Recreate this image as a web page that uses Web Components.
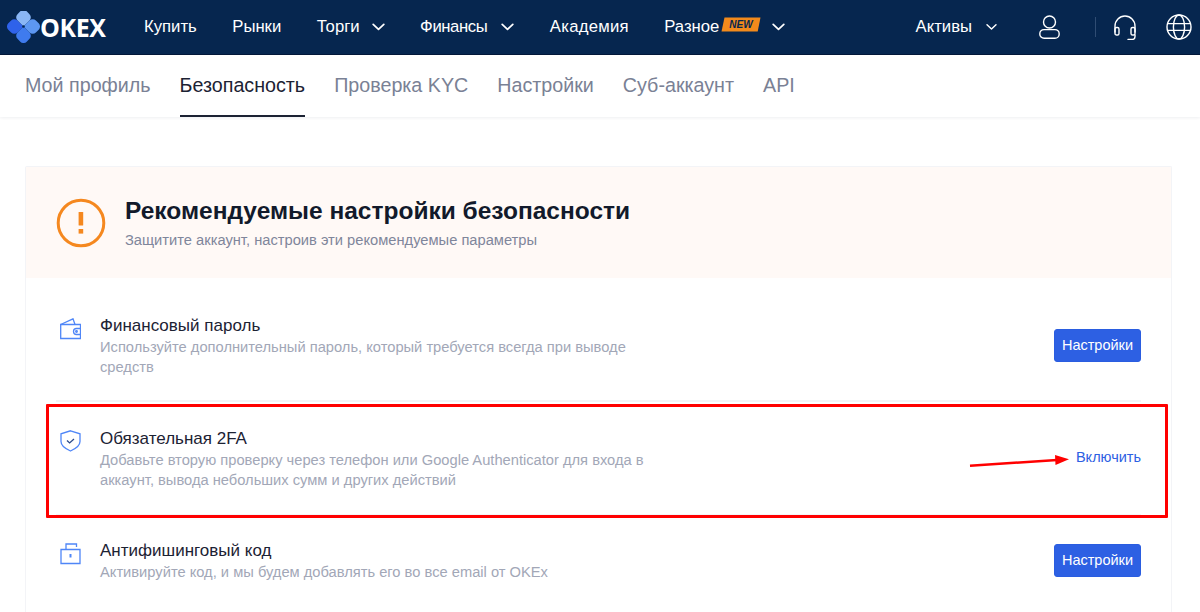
<!DOCTYPE html>
<html lang="ru">
<head>
<meta charset="utf-8">
<title>OKEx</title>
<style>
  html,body{ margin:0; padding:0; background:#fff; height:100%; overflow:hidden; }
  body{ font-family:"Liberation Sans",Arial,sans-serif; }
</style>
</head>
<body>
<ok-topbar>
  <ok-navlink>Купить</ok-navlink>
  <ok-navlink>Рынки</ok-navlink>
  <ok-navlink caret>Торги</ok-navlink>
  <ok-navlink caret style="letter-spacing:-.4px;--caret-gap:14px">Финансы</ok-navlink>
  <ok-navlink style="letter-spacing:.25px">Академия</ok-navlink>
  <ok-navlink caret isnew>Разное</ok-navlink>
</ok-topbar>
<ok-tabs>
  <ok-tab>Мой профиль</ok-tab>
  <ok-tab active>Безопасность</ok-tab>
  <ok-tab>Проверка KYC</ok-tab>
  <ok-tab>Настройки</ok-tab>
  <ok-tab>Суб-аккаунт</ok-tab>
  <ok-tab>API</ok-tab>
</ok-tabs>
<ok-card>
  <ok-row icon="wallet" title="Финансовый пароль" action="Настройки">Используйте дополнительный пароль, который требуется всегда при выводе средств</ok-row>
  <ok-row icon="shield" title="Обязательная 2FA" action="Включить" link style="height:114px">Добавьте вторую проверку через телефон или Google Authenticator для входа в аккаунт, вывода небольших сумм и других действий</ok-row>
  <ok-row icon="lock" title="Антифишинговый код" action="Настройки" style="padding-top:24px">Активируйте код, и мы будем добавлять его во все email от OKEx</ok-row>
</ok-card>
<ok-annotation></ok-annotation>

<script type="module">
// small helper, every element gets an open shadow root from a string
const shadow = (el, html) => { el.attachShadow({mode:"open"}).innerHTML = html; };

const CARET = `<svg width="13" height="8" viewBox="0 0 13 8" fill="none" stroke="#fff" stroke-width="1.7" stroke-linecap="round" stroke-linejoin="round"><path d="M1.2 1.400 6.500 6.400l5.300-5"/></svg>`;
// one logo petal: a rounded square with a sharp corner on the centre
const PETAL = "M0 0H8.500a4.500 4.500 0 0 1 4.500 4.500V8.500a4.500 4.500 0 0 1-4.500 4.500H4.500A4.500 4.500 0 0 1 0 8.500z";

class OkTopbar extends HTMLElement{
  connectedCallback(){
    shadow(this, `
    <style>
      :host{ display:block; }
      .bar{ height:54px; background:#06264f; border-bottom:1px solid #03183a; display:flex; align-items:center; color:#fff; }
      .logo{ display:flex; align-items:center; width:144px; padding-left:7px; box-sizing:border-box; flex:none; }
      .word{ font:700 25px/1 "Open Sans","Liberation Sans",sans-serif; letter-spacing:-.4px; color:#fff; margin-left:-1px; }
      nav{ display:flex; align-items:center; gap:36px; flex:1; padding-bottom:1px; }
      .right{ display:flex; align-items:center; padding-right:8px; }
      .assets{ font-size:16.7px; display:flex; align-items:center; gap:14px; margin-right:42px; padding-bottom:1px; }
      .sep{ width:1px; height:20px; background:#2f4c73; margin:0 18px 0 35px; }
      svg{ display:block; }
    </style>
    <div class="bar">
      <div class="logo">
        <svg width="34" height="32" viewBox="0 0 34 32">
          <g transform="translate(16.500 15.500)">
            <path d="${PETAL}" fill="#8ab6f5" transform="rotate(225)"/>
            <path d="${PETAL}" fill="#5d97f2" transform="rotate(315)"/>
            <path d="${PETAL}" fill="#2f62ea" transform="rotate(135)"/>
            <path d="${PETAL}" fill="#3f7bee" transform="rotate(45)"/>
            <circle r="1.300" fill="#06264f"/>
          </g>
        </svg>
        <span class="word">OKEX</span>
      </div>
      <nav><slot></slot></nav>
      <div class="right">
        <div class="assets">Активы ${CARET.replace('width="13"','width="11"')}</div>
        <svg width="21" height="24" viewBox="0 0 21 24" fill="none" stroke="#fff" stroke-width="1.400"><circle cx="10.500" cy="7" r="6"/><rect x=".8" y="14.600" width="19.400" height="8.600" rx="4.300"/></svg>
        <div class="sep"></div>
        <svg width="22" height="25" viewBox="0 0 22 25" fill="none" stroke="#fff" stroke-width="1.400" stroke-linecap="round" style="margin-right:30px"><path d="M1 17V11a10 10 0 0 1 20 0v6"/><rect x="1" y="12.500" width="4" height="7.500" rx="1.600"/><rect x="17" y="12.500" width="4" height="7.500" rx="1.600"/><path d="M21 20v1.800a2.600 2.600 0 0 1-2.600 2.600H14"/></svg>
        <svg width="26" height="26" viewBox="0 0 26 26" fill="none" stroke="#fff" stroke-width="1.400"><circle cx="13" cy="13" r="12"/><ellipse cx="13" cy="13" rx="5.600" ry="12"/><path d="M1.400 9.600h23.200M1.400 16.400h23.200"/></svg>
      </div>
    </div>`);
  }
}

class OkNavlink extends HTMLElement{
  connectedCallback(){
    const badge = this.hasAttribute("isnew") ? `<svg class="new" width="40" height="15" viewBox="0 0 40 15"><path d="M3.500 .5H39.500l-2.800 14H.5z" fill="#f28a1c"/><text x="20" y="11.300" text-anchor="middle" font-family="Liberation Sans,sans-serif" font-size="10" font-weight="700" font-style="italic" fill="#06264f">NEW</text></svg>` : "";
    const caret = this.hasAttribute("caret") ? `<span class="caret">${CARET}</span>` : "";
    shadow(this, `
    <style>
      :host{ display:inline-flex; align-items:center; font-size:16.7px; color:#fff; white-space:nowrap; margin-right:-.5px; }
      .caret{ display:flex; margin-left:var(--caret-gap,12px); }
      .new{ margin:-5px 0 0 2px; }
      .new + .caret{ margin-left:11px; }
    </style><slot></slot>${badge}${caret}`);
  }
}

class OkTabs extends HTMLElement{
  connectedCallback(){
    shadow(this, `
    <style>
      :host{ display:flex; gap:29px; height:62px; padding-left:25px; background:#fff; box-shadow:0 1px 3px rgba(20,30,60,.07); }
    </style><slot></slot>`);
  }
}

class OkTab extends HTMLElement{
  connectedCallback(){
    shadow(this, `
    <style>
      :host{ display:block; box-sizing:border-box; height:62px; padding-top:18px; font-size:19.7px; line-height:24px; color:#7a8195; white-space:nowrap; }
      :host([active]){ color:#1c2233; border-bottom:2px solid #1c2233; }
    </style><slot></slot>`);
  }
}

class OkCard extends HTMLElement{
  connectedCallback(){
    shadow(this, `
    <style>
      :host{ display:block; box-sizing:border-box; width:1147px; margin:49px 0 0 25px; border:1px solid #f3f4f7; border-bottom:0; border-radius:2px 2px 0 0; }
      .head{ height:111px; background:#fff9f6; display:flex; align-items:center; padding-left:30px; gap:19px; }
      h1{ margin:0 0 4px; font-size:24.5px; line-height:30px; font-weight:700; color:#121a2b; }
      p{ margin:0; font-size:14.7px; line-height:20px; color:#7f869b; }
      .rows{ padding:11.5px 30px 0; }
    </style>
    <div class="head">
      <svg width="50" height="50" viewBox="0 0 50 50" fill="none"><circle cx="25" cy="25" r="22.800" stroke="#f5881f" stroke-width="3"/><rect x="22.600" y="14" width="4.600" height="13.500" rx=".6" fill="#f5881f"/><rect x="22.600" y="31" width="4.600" height="4.600" fill="#f5881f"/></svg>
      <div><h1>Рекомендуемые настройки безопасности</h1><p>Защитите аккаунт, настроив эти рекомендуемые параметры</p></div>
    </div>
    <div class="rows"><slot></slot></div>`);
  }
}

const ICONS = {
  wallet:`<path d="M.7 6.500h19.800v14H.7z"/><path d="M.7 6.500 13 .8l2 5.700"/><path d="M20.500 10.500h-4a3 3 0 0 0 0 6h4"/><circle cx="16.500" cy="13.500" r=".8"/>`,
  shield:`<path d="M10.500 .8 20 3.800v7.800c0 4.400-4.200 7.200-9.500 9.400C5.200 18.800 1 16 1 11.600V3.800z"/><path d="m7 10.500 2.600 2.400 4.400-4" stroke="#2a4a8a"/>`,
  lock:`<path d="M1 6.500h19v14H1z"/><path d="M6 6.500V1h10.500v3"/><path d="M10.500 11v3.500" stroke-width="2"/>`
};

class OkRow extends HTMLElement{
  connectedCallback(){
    const a = n => this.getAttribute(n);
    const act = this.hasAttribute("link") ? `<a class="link">${a("action")}</a>` : `<button>${a("action")}</button>`;
    shadow(this, `
    <style>
      :host{ display:block; box-sizing:border-box; height:112.5px; padding-top:25.5px; border-bottom:2px solid #f3f4f7; }
      :host(:last-child){ border-bottom:0; }
      .inner{ display:flex; align-items:center; }
      svg{ flex:none; align-self:flex-start; margin:2.500px 19px 0 4px; display:block; }
      .txt{ flex:1; }
      h3{ margin:0; font-size:17px; line-height:22px; font-weight:400; color:#1c2233; }
      p{ margin:0; width:560px; font-size:14.7px; line-height:20px; color:#a2a7b7; }
      button{ display:block; width:87px; height:33px; margin-bottom:2px; padding:0; border:1px solid #2a5de0; border-radius:3px; background:#2d60e3; color:#fff; font:14.5px "Liberation Sans",Arial,sans-serif; }
      .link{ display:block; margin-bottom:4px; font-size:14.5px; line-height:20px; color:#2d60e3; }
    </style>
    <div class="inner">
      <svg width="21" height="22" viewBox="0 0 21 22" fill="none" stroke="#4f86f7" stroke-width="1.300">${ICONS[a("icon")]}</svg>
      <div class="txt"><h3>${a("title")}</h3><p><slot></slot></p></div>
      ${act}
    </div>`);
  }
}

// red marker drawn over the screenshot, sits on top of the content
class OkAnnotation extends HTMLElement{
  connectedCallback(){
    shadow(this, `
    <style>
      :host{ position:absolute; left:0; top:0; width:1200px; height:612px; pointer-events:none; }
      .box{ position:absolute; left:46px; top:404px; width:1122px; height:114px; box-sizing:border-box; border:3px solid #f00; border-radius:1px; }
      svg{ position:absolute; left:965px; top:450px; }
    </style>
    <div class="box"></div>
    <svg width="110" height="24" viewBox="0 0 110 24"><path d="M5 15.700 92 10" stroke="#f00" stroke-width="2.500" fill="none"/><path d="M90 5 104 9.300 90.500 15z" fill="#f00"/></svg>`);
  }
}

customElements.define("ok-topbar", OkTopbar);
customElements.define("ok-navlink", OkNavlink);
customElements.define("ok-tabs", OkTabs);
customElements.define("ok-tab", OkTab);
customElements.define("ok-card", OkCard);
customElements.define("ok-row", OkRow);
customElements.define("ok-annotation", OkAnnotation);
</script>
</body>
</html>
